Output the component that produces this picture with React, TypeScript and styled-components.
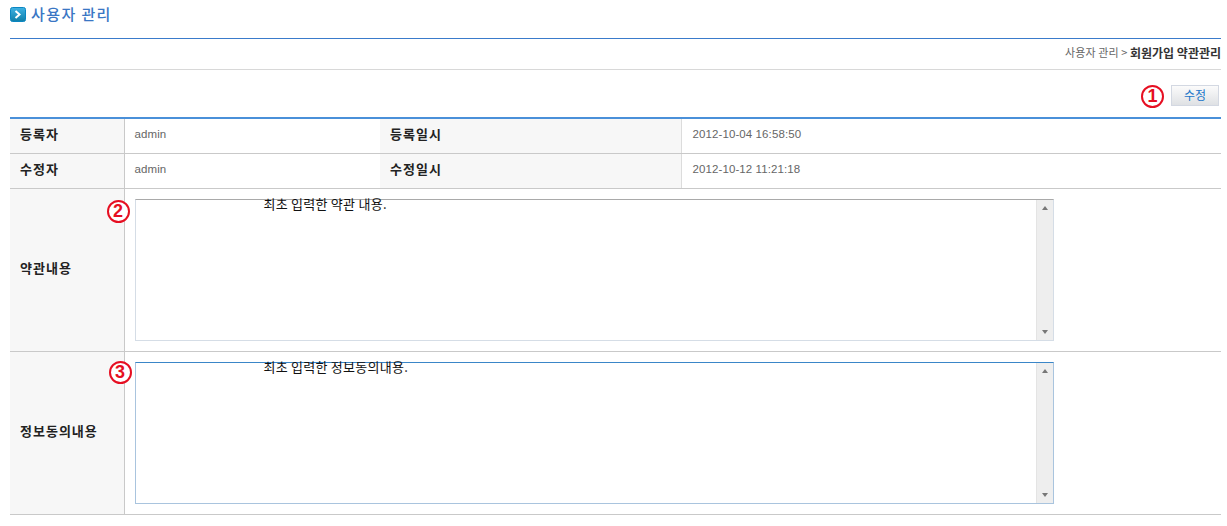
import styled, { createGlobalStyle } from "styled-components";

const GlobalStyle = createGlobalStyle`
  html, body {
    margin: 0;
    padding: 0;
    background: #fff;
    font-family: "Noto Sans CJK KR", "Liberation Sans", sans-serif;
    font-size: 12px;
    color: #333;
  }
`;

const Page = styled.div`
  width: 1211px;
  margin-left: 10px;
  display: flex;
  flex-direction: column;
`;

const TitleBar = styled.h1`
  height: 38px;
  margin: 0;
  box-sizing: border-box;
  padding-top: 7px;
  display: flex;
  align-items: flex-start;
  gap: 5px;
  font-size: 15px;
  line-height: 14px;
  font-weight: 500;
  letter-spacing: 1.4px;
  color: #3a76c4;
`;

const TitleIcon = styled.svg`
  width: 16px;
  height: 16px;
  flex: none;
`;

const Breadcrumb = styled.div`
  height: 32px;
  box-sizing: border-box;
  padding-bottom: 4px;
  border-top: 1px solid #3a7bcb;
  border-bottom: 1px solid #d8d8d8;
  display: flex;
  align-items: center;
  justify-content: flex-end;
  font-size: 11px;
  letter-spacing: 0.1px;
  color: #666;
  white-space: pre;
`;

const Current = styled.strong`
  color: #333;
  font-size: 12px;
  font-weight: 700;
  letter-spacing: 0;
`;

const Toolbar = styled.div`
  height: 47px;
  box-sizing: border-box;
  padding: 15px 2px 0 0;
  display: flex;
  justify-content: flex-end;
  align-items: flex-start;
  gap: 7px;
`;

const EditButton = styled.button`
  width: 48px;
  height: 21px;
  padding: 0 0 2px;
  border: 1px solid #d3d8e2;
  background: linear-gradient(#fbfbfb, #dfe1e4);
  color: #1b76c9;
  font-family: inherit;
  font-size: 12px;
`;

const Marker = styled.span<{ $left?: number; $top?: number }>`
  width: 23px;
  height: 23px;
  box-sizing: border-box;
  border: 2px solid #e60f22;
  border-radius: 50%;
  background: #fff;
  color: #e60f22;
  font-family: "Liberation Sans", sans-serif;
  font-size: 18px;
  font-weight: 700;
  line-height: 19px;
  text-align: center;
  flex: none;
  ${(p) =>
    p.$left !== undefined &&
    `position: absolute; left: ${p.$left}px; top: ${p.$top}px;`}
`;

const Table = styled.table`
  width: 100%;
  table-layout: fixed;
  border-collapse: collapse;
  border-top: 2px solid #4a90d9;
`;

const Th = styled.th<{ $h?: number }>`
  height: ${(p) => p.$h ?? 35}px;
  padding: 0 10px 5px;
  box-sizing: border-box;
  background: #f7f7f7;
  border-bottom: 1px solid #c9c9c9;
  text-align: left;
  font-size: 13px;
  font-weight: 700;
  letter-spacing: 1px;
  color: #222;
`;

const SideTh = styled(Th)`
  border-right: 1px solid #c9c9c9;
`;

const MidTh = styled(Th)`
  border-right: 1px solid #dcdcdc;
`;

const Td = styled.td<{ $inset?: number }>`
  padding: 0 10px 3px ${(p) => p.$inset ?? 10}px;
  border-bottom: 1px solid #c9c9c9;
  font-family: "Liberation Sans", sans-serif;
  font-size: 11.5px;
  letter-spacing: 0.1px;
  color: #666;
`;

const BoxCell = styled(Td)`
  position: relative;
  padding: 10px;
  vertical-align: top;
`;

const BoxFrame = styled.div<{ $active?: boolean }>`
  width: 919px;
  height: 142px;
  box-sizing: border-box;
  display: flex;
  background: #fff;
  border: 1px solid #d5dde6;
  border-top-color: ${(p) => (p.$active ? "#3a86c8" : "#a9a9a9")};
  ${(p) =>
    p.$active &&
    `border-left-color: #a9c4de; border-right-color: #a9c4de; border-bottom-color: #a9c4de;`}
`;

const BoxText = styled.div`
  flex: 1;
  padding-left: 128px;
  font-family: "Noto Sans CJK KR", sans-serif;
  font-size: 13px;
  line-height: 8px;
  letter-spacing: 0.25px;
  color: #111;
`;

const Scrollbar = styled.div`
  width: 16px;
  background: #eeeeee;
  border-left: 1px solid #e4e4e4;
  display: flex;
  flex-direction: column;
  justify-content: space-between;
  align-items: center;
  padding: 6px 0;
`;

const Arrow = styled.span<{ $down?: boolean }>`
  width: 0;
  height: 0;
  border-left: 3px solid transparent;
  border-right: 3px solid transparent;
  ${(p) =>
    p.$down ? "border-top: 4px solid #777;" : "border-bottom: 4px solid #777;"}
`;

const TextBox = ({ text, active }: { text: string; active?: boolean }) => (
  <BoxFrame $active={active}>
    <BoxText>{text}</BoxText>
    <Scrollbar>
      <Arrow />
      <Arrow $down />
    </Scrollbar>
  </BoxFrame>
);

export default function App() {
  return (
    <>
      <GlobalStyle />
      <Page>
        <TitleBar>
          <TitleIcon viewBox="0 0 16 16">
            <defs>
              <linearGradient id="tile" x1="0" y1="0" x2="0" y2="1">
                <stop offset="0" stopColor="#3fb2e4" />
                <stop offset="1" stopColor="#0f7fa8" />
              </linearGradient>
            </defs>
            <rect x="0.5" y="0.5" width="15" height="14" rx="2" fill="url(#tile)" stroke="#0a86c2" />
            <path d="M5.5 4 L9.5 7.5 L5.5 11" fill="none" stroke="#fff" strokeWidth="2" />
          </TitleIcon>
          사용자 관리
        </TitleBar>
        <Breadcrumb>
          사용자 관리 &gt; <Current>회원가입 약관관리</Current>
        </Breadcrumb>
        <Toolbar>
          <Marker>1</Marker>
          <EditButton>수정</EditButton>
        </Toolbar>
        <Table>
          <colgroup>
            <col width={114} />
            <col width={256} />
            <col width={301} />
            <col />
          </colgroup>
          <tbody>
            <tr>
              <SideTh>등록자</SideTh>
              <Td>admin</Td>
              <MidTh>등록일시</MidTh>
              <Td $inset={11}>2012-10-04 16:58:50</Td>
            </tr>
            <tr>
              <SideTh>수정자</SideTh>
              <Td>admin</Td>
              <MidTh>수정일시</MidTh>
              <Td $inset={11}>2012-10-12 11:21:18</Td>
            </tr>
            <tr>
              <SideTh $h={163}>약관내용</SideTh>
              <BoxCell colSpan={3}>
                <Marker $left={-18} $top={11}>2</Marker>
                <TextBox text="최초 입력한 약관 내용." />
              </BoxCell>
            </tr>
            <tr>
              <SideTh $h={163}>정보동의내용</SideTh>
              <BoxCell colSpan={3}>
                <Marker $left={-16} $top={9}>3</Marker>
                <TextBox text="최초 입력한 정보동의내용." active />
              </BoxCell>
            </tr>
          </tbody>
        </Table>
      </Page>
    </>
  );
}
